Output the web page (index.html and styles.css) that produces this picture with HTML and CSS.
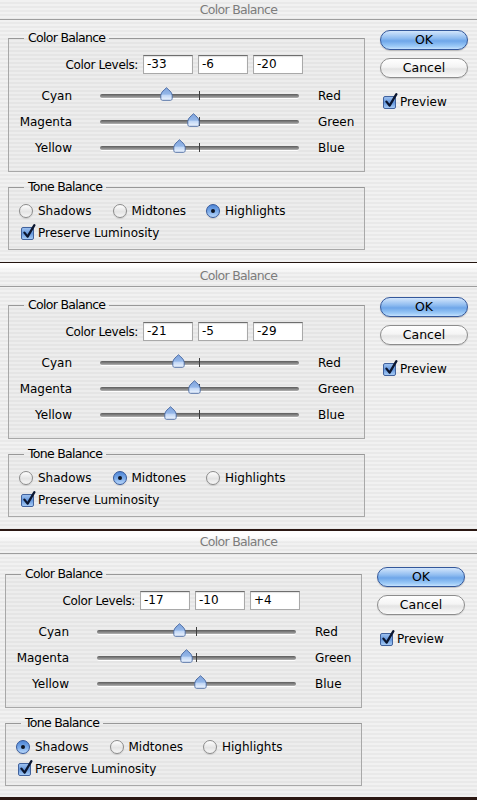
FILE: index.html
```html
<!DOCTYPE html>
<html>
<head lang="en">
    <meta charset="UTF-8">
    <title>Color Balance</title>
    <link rel="stylesheet" href="styles.css">
</head>
<body>
<!-- shared gradient for the slider thumbs -->
<svg class="defs" width="0" height="0">
    <defs>
        <linearGradient id="thumbfill" x1="0" y1="0" x2="0" y2="1">
            <stop offset="0" stop-color="#7fa3dc"/>
            <stop offset="0.5" stop-color="#93b6e8"/>
            <stop offset="0.62" stop-color="#c3d8f6"/>
            <stop offset="1" stop-color="#eef5fe"/>
        </linearGradient>
    </defs>
</svg>

<!-- dialog 1 : highlights -->
<div class="dialog">
    <div class="titlebar">Color Balance</div>
    <div class="body">
        <div class="main">
            <fieldset class="group colors">
                <legend>Color Balance</legend>
                <div class="levels">
                    <span class="levels-label">Color Levels:</span>
                    <span class="field">-33</span>
                    <span class="field">-6</span>
                    <span class="field">-20</span>
                </div>
                <div class="sliders">
                    <div class="slider">
                        <span class="slider-l">Cyan</span>
                        <div class="track"><span class="tick"></span><svg class="thumb" style="--v:-33" viewBox="0 0 13 14"><path d="M6.5 0.7C8.2 2.6 12.2 5 12.2 8.4L12.2 11.4C12.2 12.7 11.4 13.3 10.4 13.3L2.6 13.3C1.6 13.3 0.8 12.7 0.8 11.4L0.8 8.4C0.8 5 4.8 2.6 6.5 0.7Z"/></svg></div>
                        <span class="slider-r">Red</span>
                    </div>
                    <div class="slider">
                        <span class="slider-l">Magenta</span>
                        <div class="track"><span class="tick"></span><svg class="thumb" style="--v:-6" viewBox="0 0 13 14"><path d="M6.5 0.7C8.2 2.6 12.2 5 12.2 8.4L12.2 11.4C12.2 12.7 11.4 13.3 10.4 13.3L2.6 13.3C1.6 13.3 0.8 12.7 0.8 11.4L0.8 8.4C0.8 5 4.8 2.6 6.5 0.7Z"/></svg></div>
                        <span class="slider-r">Green</span>
                    </div>
                    <div class="slider">
                        <span class="slider-l">Yellow</span>
                        <div class="track"><span class="tick"></span><svg class="thumb" style="--v:-20" viewBox="0 0 13 14"><path d="M6.5 0.7C8.2 2.6 12.2 5 12.2 8.4L12.2 11.4C12.2 12.7 11.4 13.3 10.4 13.3L2.6 13.3C1.6 13.3 0.8 12.7 0.8 11.4L0.8 8.4C0.8 5 4.8 2.6 6.5 0.7Z"/></svg></div>
                        <span class="slider-r">Blue</span>
                    </div>
                </div>
            </fieldset>
            <fieldset class="group tone">
                <legend>Tone Balance</legend>
                <div class="radios">
                    <span class="opt"><span class="radio"></span>Shadows</span>
                    <span class="opt"><span class="radio"></span>Midtones</span>
                    <span class="opt"><span class="radio on"></span>Highlights</span>
                </div>
                <div class="checkrow">
                    <span class="check"><svg viewBox="0 0 14 16"><path d="M2.4 8.6L5.6 12.6L12.4 1.2"/></svg></span>Preserve Luminosity
                </div>
            </fieldset>
        </div>
        <div class="side">
            <span class="btn btn-ok">OK</span>
            <span class="btn btn-cancel">Cancel</span>
            <div class="preview"><span class="check"><svg viewBox="0 0 14 16"><path d="M2.4 8.6L5.6 12.6L12.4 1.2"/></svg></span>Preview</div>
        </div>
    </div>
</div>
<div class="sep sep-a"></div>

<!-- dialog 2 : midtones -->
<div class="dialog dialog-2">
    <div class="titlebar">Color Balance</div>
    <div class="body">
        <div class="main">
            <fieldset class="group colors">
                <legend>Color Balance</legend>
                <div class="levels">
                    <span class="levels-label">Color Levels:</span>
                    <span class="field">-21</span>
                    <span class="field">-5</span>
                    <span class="field">-29</span>
                </div>
                <div class="sliders">
                    <div class="slider">
                        <span class="slider-l">Cyan</span>
                        <div class="track"><span class="tick"></span><svg class="thumb" style="--v:-21" viewBox="0 0 13 14"><path d="M6.5 0.7C8.2 2.6 12.2 5 12.2 8.4L12.2 11.4C12.2 12.7 11.4 13.3 10.4 13.3L2.6 13.3C1.6 13.3 0.8 12.7 0.8 11.4L0.8 8.4C0.8 5 4.8 2.6 6.5 0.7Z"/></svg></div>
                        <span class="slider-r">Red</span>
                    </div>
                    <div class="slider">
                        <span class="slider-l">Magenta</span>
                        <div class="track"><span class="tick"></span><svg class="thumb" style="--v:-5" viewBox="0 0 13 14"><path d="M6.5 0.7C8.2 2.6 12.2 5 12.2 8.4L12.2 11.4C12.2 12.7 11.4 13.3 10.4 13.3L2.6 13.3C1.6 13.3 0.8 12.7 0.8 11.4L0.8 8.4C0.8 5 4.8 2.6 6.5 0.7Z"/></svg></div>
                        <span class="slider-r">Green</span>
                    </div>
                    <div class="slider">
                        <span class="slider-l">Yellow</span>
                        <div class="track"><span class="tick"></span><svg class="thumb" style="--v:-29" viewBox="0 0 13 14"><path d="M6.5 0.7C8.2 2.6 12.2 5 12.2 8.4L12.2 11.4C12.2 12.7 11.4 13.3 10.4 13.3L2.6 13.3C1.6 13.3 0.8 12.7 0.8 11.4L0.8 8.4C0.8 5 4.8 2.6 6.5 0.7Z"/></svg></div>
                        <span class="slider-r">Blue</span>
                    </div>
                </div>
            </fieldset>
            <fieldset class="group tone">
                <legend>Tone Balance</legend>
                <div class="radios">
                    <span class="opt"><span class="radio"></span>Shadows</span>
                    <span class="opt"><span class="radio on"></span>Midtones</span>
                    <span class="opt"><span class="radio"></span>Highlights</span>
                </div>
                <div class="checkrow">
                    <span class="check"><svg viewBox="0 0 14 16"><path d="M2.4 8.6L5.6 12.6L12.4 1.2"/></svg></span>Preserve Luminosity
                </div>
            </fieldset>
        </div>
        <div class="side">
            <span class="btn btn-ok">OK</span>
            <span class="btn btn-cancel">Cancel</span>
            <div class="preview"><span class="check"><svg viewBox="0 0 14 16"><path d="M2.4 8.6L5.6 12.6L12.4 1.2"/></svg></span>Preview</div>
        </div>
    </div>
</div>
<div class="sep sep-b"></div>

<!-- dialog 3 : shadows -->
<div class="dialog dialog-3">
    <div class="titlebar">Color Balance</div>
    <div class="body">
        <div class="main">
            <fieldset class="group colors">
                <legend>Color Balance</legend>
                <div class="levels">
                    <span class="levels-label">Color Levels:</span>
                    <span class="field">-17</span>
                    <span class="field">-10</span>
                    <span class="field">+4</span>
                </div>
                <div class="sliders">
                    <div class="slider">
                        <span class="slider-l">Cyan</span>
                        <div class="track"><span class="tick"></span><svg class="thumb" style="--v:-17" viewBox="0 0 13 14"><path d="M6.5 0.7C8.2 2.6 12.2 5 12.2 8.4L12.2 11.4C12.2 12.7 11.4 13.3 10.4 13.3L2.6 13.3C1.6 13.3 0.8 12.7 0.8 11.4L0.8 8.4C0.8 5 4.8 2.6 6.5 0.7Z"/></svg></div>
                        <span class="slider-r">Red</span>
                    </div>
                    <div class="slider">
                        <span class="slider-l">Magenta</span>
                        <div class="track"><span class="tick"></span><svg class="thumb" style="--v:-10" viewBox="0 0 13 14"><path d="M6.5 0.7C8.2 2.6 12.2 5 12.2 8.4L12.2 11.4C12.2 12.7 11.4 13.3 10.4 13.3L2.6 13.3C1.6 13.3 0.8 12.7 0.8 11.4L0.8 8.4C0.8 5 4.8 2.6 6.5 0.7Z"/></svg></div>
                        <span class="slider-r">Green</span>
                    </div>
                    <div class="slider">
                        <span class="slider-l">Yellow</span>
                        <div class="track"><span class="tick"></span><svg class="thumb" style="--v:4" viewBox="0 0 13 14"><path d="M6.5 0.7C8.2 2.6 12.2 5 12.2 8.4L12.2 11.4C12.2 12.7 11.4 13.3 10.4 13.3L2.6 13.3C1.6 13.3 0.8 12.7 0.8 11.4L0.8 8.4C0.8 5 4.8 2.6 6.5 0.7Z"/></svg></div>
                        <span class="slider-r">Blue</span>
                    </div>
                </div>
            </fieldset>
            <fieldset class="group tone">
                <legend>Tone Balance</legend>
                <div class="radios">
                    <span class="opt"><span class="radio on"></span>Shadows</span>
                    <span class="opt"><span class="radio"></span>Midtones</span>
                    <span class="opt"><span class="radio"></span>Highlights</span>
                </div>
                <div class="checkrow">
                    <span class="check"><svg viewBox="0 0 14 16"><path d="M2.4 8.6L5.6 12.6L12.4 1.2"/></svg></span>Preserve Luminosity
                </div>
            </fieldset>
        </div>
        <div class="side">
            <span class="btn btn-ok">OK</span>
            <span class="btn btn-cancel">Cancel</span>
            <div class="preview"><span class="check"><svg viewBox="0 0 14 16"><path d="M2.4 8.6L5.6 12.6L12.4 1.2"/></svg></span>Preview</div>
        </div>
    </div>
</div>
<div class="sep sep-c"></div>
</body>
</html>
```

FILE: styles.css
```css
*{
    margin: 0;
    padding: 0;
    box-sizing: border-box;
}
body{
    width: 477px;
    font-family: "DejaVu Sans", "Lucida Grande", sans-serif;
    font-size: 12px;
    color: #000;
    background: #fff;
}
.defs{
    position: absolute;
}

/* pinstriped window */
.dialog{
    background: repeating-linear-gradient(#f1f1f1 0, #f1f1f1 2px, #e9e9e9 2px, #e9e9e9 4px);
}
.titlebar{
    height: 20px;
    border-bottom: 1px solid #9d9d9d;
    text-align: center;
    color: #7c7c7c;
    font-size: 12.5px;
    line-height: 19px;
    letter-spacing: -0.7px;
}
.dialog-2 .titlebar{
    height: 21px;
    line-height: 20px;
    background: linear-gradient(#fdfdfd, rgba(253,253,253,0) 8px);
}
.dialog-3 .titlebar{
    height: 23px;
    line-height: 22px;
    background: linear-gradient(#fefefe, #fefefe 5px, rgba(254,254,254,0) 12px);
}
.body{
    display: flex;
    height: 242px;
    padding: 10px 0 0 8px;
}
.dialog-3 .body{
    height: 243px;
    padding: 12px 0 0 5px;
}
.dialog-3 .side{
    margin-top: 1px;
}
.main{
    width: 357px;
}
.side{
    width: 88px;
    margin-left: 15px;
}

/* group boxes */
.group{
    border: 1px solid #a8a8a8;
    border-top-color: #989898;
    background: rgba(0,0,0,0.015);
    padding: 0 0 10px;
    min-width: 0;
}
.group legend{
    margin-left: 15px;
    padding: 0 4px;
    font-size: 12.5px;
    line-height: 16px;
    letter-spacing: -0.7px;
}
.tone{
    margin-top: 7px;
    padding-bottom: 7px;
}

/* color level fields */
.levels{
    display: flex;
    align-items: center;
    height: 19px;
    margin-top: 9px;
}
.levels-label{
    width: 129px;
    margin-right: 5px;
    text-align: right;
    letter-spacing: -0.35px;
}
.field{
    width: 50px;
    height: 19px;
    padding-left: 3px;
    line-height: 17px;
    background: #fff;
    border: 1px solid #a9a9a9;
    border-top-color: #6e6e6e;
    box-shadow: inset 0 1px 1px rgba(0,0,0,0.12);
}
.field + .field{
    margin-left: 5px;
}

/* sliders */
.sliders{
    margin-top: 9px;
}
.slider{
    display: flex;
    align-items: center;
    height: 26px;
}
.slider-l{
    width: 63px;
    text-align: right;
}
.slider-r{
    margin-left: 19px;
}
.track{
    position: relative;
    width: 199px;
    height: 4px;
    margin-left: 28px;
    border-radius: 2px;
    background: linear-gradient(#5c5c5c, #8c8c8c 60%, #b4b4b4);
    box-shadow: 0 1px 0 rgba(255,255,255,0.9);
}
.tick{
    position: absolute;
    left: 99px;
    top: -3px;
    width: 1px;
    height: 9px;
    background: #3e3e3e;
}
.thumb{
    position: absolute;
    left: calc(93px + var(--v) * 1px);
    top: -7px;
    width: 13px;
    height: 14px;
    overflow: visible;
}
.thumb path{
    fill: url(#thumbfill);
    stroke: #46679f;
    stroke-width: 0.9;
}

/* radios + checkboxes */
.radios{
    display: flex;
    align-items: center;
    height: 18px;
    margin-top: 7px;
    padding-left: 10px;
}
.opt{
    display: flex;
    align-items: center;
    width: 93.5px;
}
.radio{
    position: relative;
    width: 14px;
    height: 14px;
    margin-right: 5px;
    border-radius: 50%;
    border: 1px solid #8b8b8b;
    background: linear-gradient(#fefefe, #e4e4e4 55%, #f6f6f6);
    box-shadow: 0 1px 1px rgba(0,0,0,0.12);
}
.radio.on{
    border-color: #33579a;
    background: linear-gradient(#4f86d6, #79a9e8 50%, #b7d6fa);
}
.radio.on:after{
    content: "";
    position: absolute;
    left: 4px;
    top: 4px;
    width: 4px;
    height: 4px;
    border-radius: 50%;
    background: #0e1420;
}
.checkrow{
    display: flex;
    align-items: center;
    height: 18px;
    margin-top: 4px;
    padding-left: 12px;
}
.check{
    position: relative;
    width: 13px;
    height: 13px;
    margin-right: 4px;
    border: 1px solid #41629d;
    border-radius: 2px;
    background: linear-gradient(#9cc0ef, #6597dc 50%, #a6cbf6);
}
.check svg{
    position: absolute;
    left: 0;
    top: -4px;
    width: 14px;
    height: 16px;
    overflow: visible;
}
.check path{
    fill: none;
    stroke: #0b1630;
    stroke-width: 2.3;
    stroke-linecap: round;
    stroke-linejoin: round;
}

/* push buttons */
.btn{
    display: block;
    width: 88px;
    height: 20px;
    border-radius: 10px;
    text-align: center;
    font-size: 12.5px;
    line-height: 18px;
}
.btn-ok{
    border: 1px solid #34589b;
    background: linear-gradient(#d3e6fc, #8fbcf0 40%, #6ea6e9 55%, #9ccaf7 85%, #c5e1fd);
    box-shadow: 0 1px 1px rgba(0,0,0,0.2);
}
.btn-cancel{
    margin-top: 8px;
    border: 1px solid #8d8d8d;
    background: linear-gradient(#ffffff, #f4f4f4 45%, #e4e4e4 55%, #fafafa);
    box-shadow: 0 1px 1px rgba(0,0,0,0.12);
}
.preview{
    display: flex;
    align-items: center;
    height: 18px;
    margin-top: 15px;
    padding-left: 3px;
}

/* dark desktop edges between the windows */
.sep-a{
    height: 4px;
    border-top: 1px solid #24150f;
    background: #fff;
}
.sep-b{
    height: 2px;
    background: #2b1813;
}
.sep-c{
    height: 3px;
    background: #2b1813;
}
```
